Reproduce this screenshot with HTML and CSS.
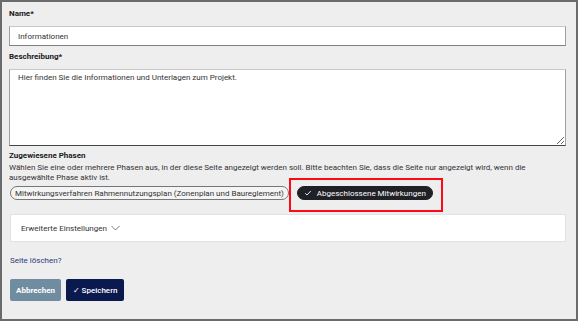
FILE: index.html
```html
<!DOCTYPE html>
<html lang="de">
<head>
  <meta charset="UTF-8" />
  <title>Seite bearbeiten</title>
  <link rel="stylesheet" href="styles.css">
</head>
<body>
  <div class="frame">
    <form class="page-form">
      <label class="field-label" for="name">Name*</label>
      <input id="name" class="text-input" type="text" value="Informationen" />

      <label class="field-label" for="desc">Beschreibung*</label>
      <textarea id="desc" class="text-area">Hier finden Sie die Informationen und Unterlagen zum Projekt.</textarea>

      <div class="phases">
        <div class="field-label">Zugewiesene Phasen</div>
        <p class="hint">Wählen Sie eine oder mehrere Phasen aus, in der diese Seite angezeigt werden soll. Bitte beachten Sie, dass die Seite nur angezeigt wird, wenn die ausgewählte Phase aktiv ist.</p>
        <div class="pill-row">
          <button type="button" class="pill">Mitwirkungsverfahren Rahmennutzungsplan (Zonenplan und Baureglement)</button>
          <div class="highlight">
            <button type="button" class="pill pill-active">
              <svg width="8" height="8" viewBox="0 0 16 16"><path d="M2.5 8.5l3.5 3.5 7.5-8" fill="none" stroke="#fff" stroke-width="1.8" /></svg>
              Abgeschlossene Mitwirkungen
            </button>
          </div>
        </div>
      </div>

      <div class="advanced">
        <span>Erweiterte Einstellungen</span>
        <svg width="9" height="6" viewBox="0 0 18 10"><path d="M1 1l8 8 8-8" fill="none" stroke="#444" stroke-width="1.4" /></svg>
      </div>

      <a href="#" class="delete-link">Seite löschen?</a>

      <div class="actions">
        <button type="button" class="btn btn-cancel">Abbrechen</button>
        <button type="button" class="btn btn-save">✓ Speichern</button>
      </div>
    </form>
  </div>
</body>
</html>
```

FILE: styles.css
```css
html, body {
  margin: 0;
  padding: 0;
  background: #eeeeee;
  font-family: Roboto, "Liberation Sans", sans-serif;
}

.frame {
  box-sizing: border-box;
  width: 578px;
  height: 321px;
  border: 2px solid #6b6b6b;
  background: #eeeeee;
  padding: 7px 10px 0 7px;
}

.page-form {
  display: flex;
  flex-direction: column;
}

.field-label {
  font-size: 8px;
  font-weight: 700;
  color: #1a1a1a;
  line-height: 10px;
  margin-bottom: 7px;
}

.text-input {
  box-sizing: border-box;
  height: 20px;
  border: 1px solid #a0a0a0;
  border-top-color: #c8c8c8;
  border-bottom-color: #808080;
  background: #fff;
  font: 8px Roboto, "Liberation Sans", sans-serif;
  color: #333;
  padding: 0 8px;
  margin: 0 0 6px;
}

.text-area {
  box-sizing: border-box;
  height: 77px;
  border: 1px solid #a0a0a0;
  border-top-color: #c8c8c8;
  border-bottom-color: #444;
  background: #fff;
  font: 8px Roboto, "Liberation Sans", sans-serif;
  color: #333;
  padding: 3px 8px;
  margin: 0 0 5px;
  resize: vertical;
}

.phases .field-label {
  margin-bottom: 2px;
}

.hint {
  margin: 0 0 3px;
  font-size: 8px;
  line-height: 10px;
  color: #333;
  padding-right: 30px;
}

.pill-row {
  display: flex;
  align-items: center;
  gap: 8px;
  margin-left: 1px;
}

.pill {
  font: 8px Roboto, "Liberation Sans", sans-serif;
  color: #333;
  background: #f4f4f4;
  border: 1px solid #777;
  border-radius: 8px;
  height: 14px;
  padding: 0 4px;
  display: flex;
  align-items: center;
  gap: 5px;
}

.highlight {
  position: relative;
}

.highlight::after {
  content: "";
  position: absolute;
  top: -8px;
  left: -8px;
  right: -10px;
  bottom: -12px;
  border: 2px solid #ff0a14;
  pointer-events: none;
}

.pill-active {
  background: #202126;
  color: #fff;
  border-color: #202126;
  padding: 0 6px 0 6px;
}

.advanced {
  margin: 14px 0 0 1px;
  height: 28px;
  box-sizing: border-box;
  background: #fff;
  border: 1px solid #e2e2e2;
  display: flex;
  align-items: center;
  gap: 4px;
  padding-left: 10px;
  font-size: 8px;
  color: #333;
}

.delete-link {
  margin: 14px 0 0 1px;
  font-size: 8px;
  color: #2d3a7a;
  text-decoration: none;
  line-height: 10px;
}

.actions {
  display: flex;
  gap: 5px;
  margin: 13px 0 0 1px;
}

.btn {
  height: 22px;
  border: none;
  border-radius: 2px;
  color: #fff;
  font: 700 8px Roboto, "Liberation Sans", sans-serif;
  padding: 0 6px;
}

.btn-cancel {
  background: #6f8ca1;
  width: 51px;
}

.btn-save {
  background: #0b1a4e;
  width: 58px;
  font-weight: 500;
}
```
